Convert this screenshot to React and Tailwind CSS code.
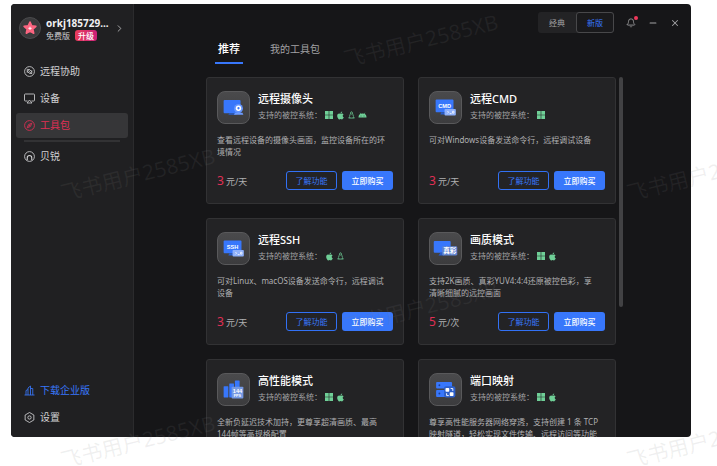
import { useState } from 'react';
import { Minus, X, ChevronRight, Bell } from 'lucide-react';
import { FaApple } from 'react-icons/fa';

/* Iconos de sistemas */
const WindowsIcon = () => (
  <svg viewBox="0 0 16 16" className="w-[8px] h-[8px]" fill="currentColor">
    <path d="M0 0h7.4v7.4H0zM8.6 0H16v7.4H8.6zM0 8.6h7.4V16H0zM8.6 8.6H16V16H8.6z" />
  </svg>
);

const LinuxIcon = () => (
  <svg viewBox="0 0 16 18" className="w-[7px] h-[8px]" fill="none" stroke="currentColor" strokeWidth="1.7">
    <path d="M8 1.500c-1.600 0-2 1.200-2 3 0 2.400-2.600 4.800-2.600 8M8 1.500c1.600 0 2 1.200 2 3 0 2.400 2.600 4.800 2.600 8" />
    <path d="M1.500 16c.4-2.400 2.600-3 4 0M14.500 16c-.4-2.400-2.600-3-4 0M1.500 16h13" />
    <path d="M6.500 5.500L8 6.800l1.500-1.300" />
  </svg>
);

const AndroidIcon = () => (
  <svg viewBox="0 0 18 11" className="w-[9px] h-[6px]" fill="currentColor">
    <path d="M1 10.500a8 8 0 0 1 16 0z" />
    <path d="M4 1l2 3M14 1l-2 3" stroke="currentColor" strokeWidth="1" />
    <circle cx="6" cy="7.500" r="0.900" fill="#232325" />
    <circle cx="12" cy="7.500" r="0.900" fill="#232325" />
  </svg>
);

const sistemas = {
  windows: <WindowsIcon />,
  apple: <FaApple className="w-[9px] h-[9px]" />,
  linux: <LinuxIcon />,
  android: <AndroidIcon />,
};

/* Iconos de cada herramienta */
const CamaraIcon = () => (
  <svg viewBox="0 0 33 33" className="w-full h-full">
    <path d="M7 8.500h16a1 1 0 0 1 1 1v12a1 1 0 0 1-1 1H7a1 1 0 0 1-1-1v-12a1 1 0 0 1 1-1z" fill="#3877fb" />
    <path d="M12 22.500h7l1 1.700h-9z" fill="#285cc9" />
    <path d="M18 22h8l1 2.200H17z" fill="#6c9bff" />
    <circle cx="21.800" cy="17.500" r="4.800" fill="#6595fd" />
    <circle cx="21.800" cy="17.300" r="2.900" fill="#fff" />
    <circle cx="21.800" cy="17.300" r="1.200" fill="#3877fb" />
  </svg>
);

const TerminalIcon = ({ texto }) => (
  <svg viewBox="0 0 33 33" className="w-full h-full">
    <rect x="6" y="8" width="19" height="13.500" rx="1" fill="#3877fb" />
    <path d="M12 21.500h5v2.500h-6z" fill="#285cc9" />
    <text x="15.500" y="16.500" textAnchor="middle" fontSize="6" fontWeight="700" fill="#fff" fontFamily="Liberation Sans, sans-serif">{texto}</text>
    <rect x="15.500" y="18" width="12" height="7" rx="1" fill="#8eb0fa" />
    <path d="M18.500 20.200l1.300 1.300-1.300 1.300M21 23h2M24 20.500h1.500v2H24z" fill="none" stroke="#fff" strokeWidth="0.800" />
  </svg>
);

const ColorIcon = () => (
  <svg viewBox="0 0 33 33" className="w-full h-full">
    <rect x="4" y="8.500" width="18" height="12.500" rx="1" fill="#3877fb" />
    <path d="M11 21h4v3H9z" fill="#285cc9" />
    <rect x="13" y="14" width="16" height="10" rx="1.500" fill="#5f83cf" />
    <text x="21" y="21.500" textAnchor="middle" fontSize="7" fontWeight="700" fill="#fff" fontFamily="Noto Sans CJK SC, sans-serif">真彩</text>
  </svg>
);

const RendimientoIcon = () => (
  <svg viewBox="0 0 33 33" className="w-full h-full">
    <rect x="6" y="13" width="5" height="12" rx="0.500" fill="#3877fb" />
    <rect x="12" y="10" width="5" height="15" rx="0.500" fill="#3877fb" />
    <rect x="18" y="7" width="5" height="18" rx="0.500" fill="#3877fb" />
    <rect x="14.500" y="13.500" width="12.500" height="12.500" rx="1" fill="#7599e4" />
    <text x="20.700" y="19.700" textAnchor="middle" fontSize="6" fontWeight="700" fill="#fff" fontFamily="Liberation Sans, sans-serif">144</text>
    <text x="20.700" y="24.500" textAnchor="middle" fontSize="4" fontWeight="700" fill="#fff" fontFamily="Liberation Sans, sans-serif">FPS</text>
  </svg>
);

const PuertoIcon = () => (
  <svg viewBox="0 0 33 33" className="w-full h-full">
    <rect x="6.500" y="8.500" width="17" height="7" rx="1" fill="#3877fb" />
    <rect x="6.500" y="17" width="17" height="7.500" rx="1" fill="#3877fb" />
    <circle cx="10" cy="12" r="1" fill="#1c3f92" />
    <circle cx="10" cy="20.700" r="1" fill="#1c3f92" />
    <rect x="15" y="13" width="12" height="12" rx="2" fill="#2d5fc9" />
    <rect x="16.500" y="15" width="4" height="4" rx="0.800" fill="#fff" />
    <rect x="21" y="19.500" width="4" height="4" rx="0.800" fill="#fff" />
    <path d="M22 15.500h2.300v2.500M20 23h-2.300v-2.500" fill="none" stroke="#fff" strokeWidth="1" />
  </svg>
);

const herramientas = [
  {
    titulo: '远程摄像头',
    icono: <CamaraIcon />,
    os: ['windows', 'apple', 'linux', 'android'],
    texto: '查看远程设备的摄像头画面，监控设备所在的环\n境情况',
    precio: 3,
    unidad: '元/天',
  },
  {
    titulo: '远程CMD',
    icono: <TerminalIcon texto="CMD" />,
    os: ['windows'],
    texto: '可对Windows设备发送命令行，远程调试设备',
    precio: 3,
    unidad: '元/天',
  },
  {
    titulo: '远程SSH',
    icono: <TerminalIcon texto="SSH" />,
    os: ['apple', 'linux'],
    texto: '可对Linux、macOS设备发送命令行，远程调试\n设备',
    precio: 3,
    unidad: '元/天',
  },
  {
    titulo: '画质模式',
    icono: <ColorIcon />,
    os: ['windows', 'apple'],
    texto: '支持2K画质、真彩YUV4:4:4还原被控色彩，享\n清晰细腻的远控画面',
    precio: 5,
    unidad: '元/次',
  },
  {
    titulo: '高性能模式',
    icono: <RendimientoIcon />,
    os: ['windows', 'apple'],
    texto: '全新负延迟技术加持，更尊享超清画质、最高\n144帧等高规格配置',
  },
  {
    titulo: '端口映射',
    icono: <PuertoIcon />,
    os: ['windows', 'apple'],
    texto: '尊享高性能服务器网络穿透，支持创建 1 条 TCP\n映射隧道，轻松实现文件传输、远程访问等功能',
  },
];

/* Iconos del menú lateral */
const trazo = {
  viewBox: '0 0 22 22',
  className: 'w-[11px] h-[11px] shrink-0',
  fill: 'none',
  stroke: 'currentColor',
  strokeWidth: 1.7,
};

const iconosMenu = {
  remoto: (
    <svg {...trazo}>
      <circle cx="11" cy="11" r="9.800" />
      <path d="M6.500 13.500V7l8.500 8.500M7 6.500l4.500 1M15.500 8.500V15l-4.500-.5M11 7l4.500 4.500M6.500 10.500L11 15" />
    </svg>
  ),
  equipo: (
    <svg {...trazo}>
      <path d="M7 16H2.500A1.500 1.500 0 0 1 1 14.500v-11A1.500 1.500 0 0 1 2.500 2h17A1.500 1.500 0 0 1 21 3.500v11a1.500 1.500 0 0 1-1.500 1.500H15" />
      <path d="M11 14l5 6H6z" />
    </svg>
  ),
  brujula: (
    <svg {...trazo}>
      <circle cx="11" cy="11" r="9.800" />
      <path d="M15.500 6.500l-2.600 6.400-6.400 2.600 2.600-6.400zM9.500 12.500l3-3" />
    </svg>
  ),
  marca: (
    <svg {...trazo}>
      <circle cx="11" cy="11" r="9.800" />
      <path d="M6.500 18.500v-5a4.500 4.500 0 0 1 9 0v5" strokeWidth="2.200" />
    </svg>
  ),
  empresa: (
    <svg {...trazo}>
      <path d="M1 20h20M4 20v-9l4-2M8 20V6l5-4v18M13 7h4.500v13" />
    </svg>
  ),
  ajustes: (
    <svg {...trazo}>
      <path d="M11 1l8.700 5v10L11 21l-8.700-5V6z" />
      <circle cx="11" cy="11" r="3.300" />
    </svg>
  ),
};

const marcas = [
  'left-[421px] top-[41px]',
  'left-[138px] top-[175px]',
  'left-[704px] top-[175px]',
  'left-[421px] top-[308px]',
  'left-[138px] top-[442px]',
  'left-[704px] top-[442px]',
];

function MenuItem({ icono, texto, activo, onClick, color = 'text-[#d0d0d2]' }) {
  return (
    <button
      onClick={onClick}
      className={`flex items-center gap-[5px] w-full h-[25px] pl-2 rounded-[3px] text-[10px] ${activo ? 'bg-[#363638] text-[#e02f55]' : color}`}
    >
      {iconosMenu[icono]}
      {texto}
    </button>
  );
}

function Tarjeta({ item }) {
  return (
    <article className="flex flex-col border border-[#323234] bg-[#232325] rounded-[3px] px-[10px] py-[13px]">
      <div className="flex gap-2">
        <div className="w-[33px] h-[33px] shrink-0 rounded-lg border border-[#59595b] bg-linear-to-b from-[#4a4a4c] to-[#3c3c3e]">
          {item.icono}
        </div>
        <div>
          <h2 className="text-[11px] leading-4 font-medium text-white">{item.titulo}</h2>
          <div className="flex items-center gap-[3px] text-[8px] leading-4 text-[#a2a2a4]">
            <span>支持的被控系统：</span>
            <span className="flex items-center gap-[3px] text-[#6fcf97]">
              {item.os.map(s => (
                <span key={s}>{sistemas[s]}</span>
              ))}
            </span>
          </div>
        </div>
      </div>
      <p className="mt-[10px] min-h-6 text-[8px] leading-3 whitespace-pre-line text-[#b0b0b2]">{item.texto}</p>
      {item.precio && (
        <div className="flex items-center mt-[13px] text-[8px]">
          <span className="flex items-baseline gap-[2px] mr-auto text-[9px] text-[#b0b0b2]">
            <span className="text-[12px] leading-4 text-[#e02f55]">{item.precio}</span>
            {item.unidad}
          </span>
          <button className="w-[51px] h-[19px] rounded-[3px] border border-[#3271f5] text-[#3877fb]">了解功能</button>
          <button className="w-[51px] h-[19px] ml-[5px] rounded-[3px] bg-[#3877fb] font-medium text-white">立即购买</button>
        </div>
      )}
    </article>
  );
}

function App() {
  const [menu, setMenu] = useState('brujula');
  const [tab, setTab] = useState('推荐');

  return (
    <div className="relative h-screen overflow-hidden bg-white pt-1 pl-[11px] pr-[26px] pb-[29px] font-['Noto_Sans','Noto_Sans_CJK_SC',sans-serif]">
      <div className="flex h-full rounded-[4px] overflow-hidden bg-[#161618]">
        {/* Menú lateral */}
        <aside className="flex flex-col w-[123px] shrink-0 border-r border-[#2b2b2d] bg-[#202022] px-[5px] pb-[7px]">
          <div className="flex items-center h-[48px] pl-[3px] pr-[3px] mb-[7px]">
            <div className="flex items-center justify-center w-[22px] h-[22px] shrink-0 rounded-full border border-[#4b4b4d] bg-[#3a3a3c]">
              <svg viewBox="0 0 24 24" className="w-[16px] h-[16px]">
                <path d="M12 3l2.600 5.700 6.200.7-4.600 4.200 1.300 6.200L12 16.700l-5.500 3.100 1.300-6.200-4.600-4.200 6.200-.7z" fill="#fb6580" stroke="#fb6580" strokeWidth="2.500" strokeLinejoin="round" />
                <path d="M12 10v5M9.500 12.500h5" stroke="#fff" strokeWidth="1.400" />
              </svg>
            </div>
            <div className="ml-[5px]">
              <p className="text-[10px] leading-[14px] font-bold text-[#f0f0f2]">orkj185729...</p>
              <div className="flex items-center gap-[5px] text-[8px] leading-[11px] text-[#d0d0d2]">
                <span>免费版</span>
                <button className="w-[22px] h-[11px] rounded-[3px] bg-linear-to-r from-[#e83b5a] to-[#cb1f78] font-medium text-white">升级</button>
              </div>
            </div>
            <ChevronRight className="w-[11px] h-[11px] ml-auto shrink-0 text-[#b0b0b2]" />
          </div>
          <nav className="flex flex-col gap-[2px] grow">
            <MenuItem icono="remoto" texto="远程协助" activo={menu === 'remoto'} onClick={() => setMenu('remoto')} />
            <MenuItem icono="equipo" texto="设备" activo={menu === 'equipo'} onClick={() => setMenu('equipo')} />
            <MenuItem icono="brujula" texto="工具包" activo={menu === 'brujula'} onClick={() => setMenu('brujula')} />
            <hr className="mx-2 border-t-2 border-[#323234]" />
            <MenuItem icono="marca" texto="贝锐" activo={menu === 'marca'} onClick={() => setMenu('marca')} />
          </nav>
          <div className="flex flex-col gap-[2px]">
            <MenuItem icono="empresa" texto="下载企业版" color="text-[#3877fb]" />
            <MenuItem icono="ajustes" texto="设置" />
          </div>
        </aside>

        <main className="flex flex-col grow min-w-0">
          {/* Barra superior */}
          <header className="flex items-center justify-end gap-3 pt-2 pr-[11px] text-[#a2a2a4]">
            <div className="flex h-[21px] rounded-[3px] bg-[#232325] text-[8px]">
              <button className="w-[38px]">经典</button>
              <button className="w-[38px] rounded-[3px] border border-[#48484a] bg-[#1a1a1c] text-[#3877fb]">新版</button>
            </div>
            <button aria-label="通知" className="relative">
              <Bell className="w-[10px] h-[10px]" />
              <span className="absolute -top-[2px] -right-[2px] w-1 h-1 rounded-full bg-[#f0385b]" />
            </button>
            <button aria-label="最小化"><Minus className="w-[10px] h-[10px]" strokeWidth={2.5} /></button>
            <button aria-label="关闭"><X className="w-[10px] h-[10px]" strokeWidth={2.5} /></button>
          </header>

          {/* Pestañas */}
          <div className="flex gap-6 pl-[81px] mb-[13px]">
            {['推荐', '我的工具包'].map(t => (
              <button
                key={t}
                onClick={() => setTab(t)}
                className={`px-[3px] pt-2 pb-[5px] leading-4 border-b-2 ${tab === t ? 'border-[#3877fb] text-[11px] font-medium text-white' : 'border-transparent text-[10px] text-[#a2a2a4]'}`}
              >
                {t}
              </button>
            ))}
          </div>

          {/* Lista de herramientas */}
          <div className="flex gap-[3px] grow min-h-0 pl-[72px] pr-[68px]">
            <div className="grid grid-cols-2 auto-rows-fr gap-[14px] content-start grow h-max max-h-none">
              {herramientas.map(item => (
                <Tarjeta key={item.titulo} item={item} />
              ))}
            </div>
            <div className="w-1 h-[64%] shrink-0 rounded-full bg-[#424244]" />
          </div>
        </main>
      </div>

      {/* Marca de agua */}
      <div className="absolute inset-0 overflow-hidden pointer-events-none select-none" aria-hidden="true">
        {marcas.map(m => (
          <span key={m} className={`absolute ${m} -translate-x-1/2 -translate-y-1/2 -rotate-14 whitespace-nowrap text-[21px] text-[#808080]/12`}>
            飞书用户2585XB
          </span>
        ))}
      </div>
    </div>
  );
}

export default App;
